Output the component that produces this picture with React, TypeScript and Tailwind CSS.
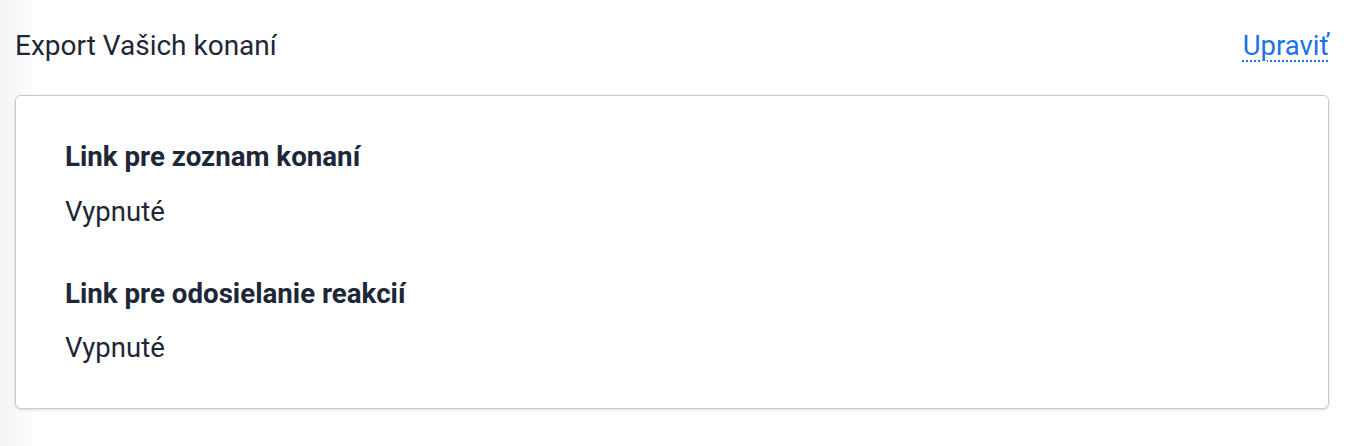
import React from "react";

export default function App() {
  return (
    <div
      className="relative w-[1354px] h-[446px] bg-white text-[#1e2738]"
      style={{ fontFamily: "Roboto, 'Noto Sans', sans-serif" }}
    >
      <div className="pointer-events-none absolute left-0 top-0 h-full w-[36px] bg-gradient-to-r from-[#f3f3f3] to-transparent" />
      <div className="relative pt-[30px] pl-[15px] pr-[25px]">
        <div className="flex items-center justify-between h-[32px]">
          <h2 className="text-[28px] leading-[32px] font-normal text-[#1e2738]">
            Export Vašich konaní
          </h2>
          <a
            href="#"
            className="text-[27.5px] leading-[32px] text-[#1a73e8] underline decoration-dotted decoration-2 underline-offset-[5px]"
          >
            Upraviť
          </a>
        </div>
        <div className="mt-[33px] w-[1314px] h-[314px] rounded-[6px] border border-[#c9c9c9] bg-white shadow-[0_1px_3px_rgba(0,0,0,0.14)] pl-[49px] pt-[45px]">
          <div className="flex flex-col">
            <div className="text-[27.7px] leading-[32px] font-bold">Link pre zoznam konaní</div>
            <div className="mt-[23px] text-[27.5px] leading-[32px]">Vypnuté</div>
            <div className="mt-[50px] text-[27.7px] leading-[32px] font-bold">Link pre odosielanie reakcií</div>
            <div className="mt-[22px] text-[27.5px] leading-[32px]">Vypnuté</div>
          </div>
        </div>
      </div>
    </div>
  );
}
